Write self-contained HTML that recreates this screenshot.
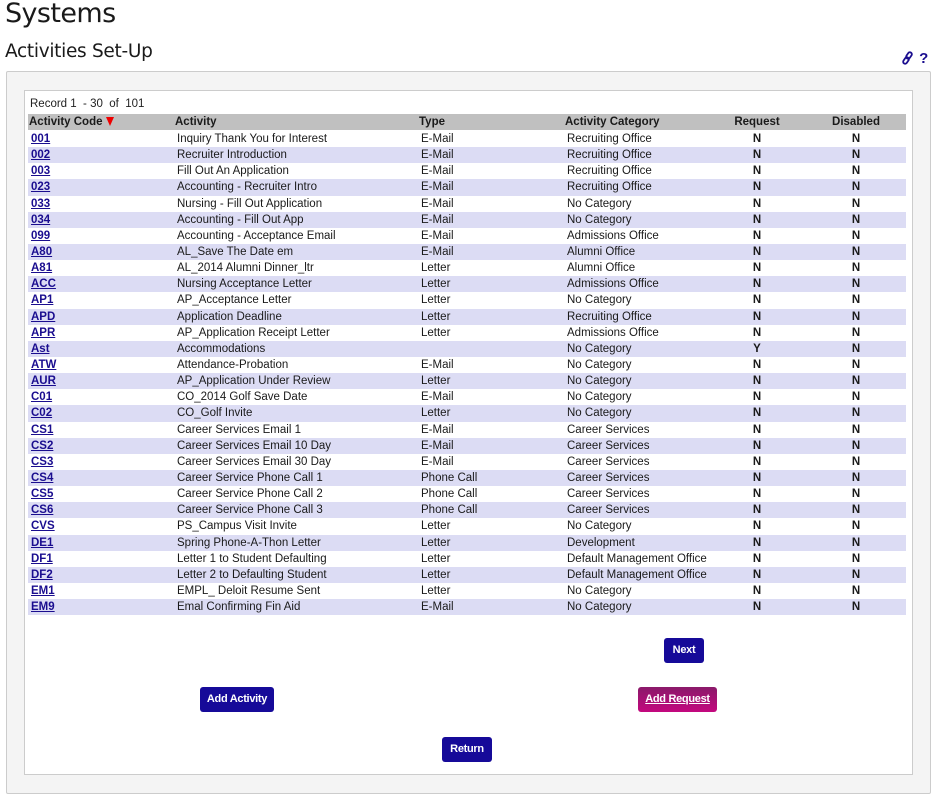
<!DOCTYPE html>
<html><head><style>
body{margin:0;width:936px;height:798px;background:#fff;font-family:"Liberation Sans",Arial,sans-serif;position:relative;overflow:hidden}
.t1{position:absolute;left:5px;top:-2px;font-size:27px;color:#1a1a1a;font-family:"DejaVu Sans","Liberation Sans",sans-serif;letter-spacing:-0.6px}
.t2{position:absolute;left:5px;top:41px;font-size:18.5px;color:#1a1a1a;font-family:"DejaVu Sans","Liberation Sans",sans-serif;letter-spacing:-0.3px}
.ic{position:absolute;left:901px;top:50px;color:#1a0d8f;font-weight:bold;font-size:15px}
.outer{position:absolute;left:6px;top:71px;width:923px;height:721px;background:#f4f4f4;border:1px solid #ccc;border-radius:2px}
.inner{position:absolute;left:24px;top:90px;width:887px;height:683px;background:#fff;border:1px solid #ccc}
.rec{position:absolute;left:30px;top:98px;font-size:11.5px;color:#222}
table{position:absolute;left:28px;top:114px;width:878px;border-collapse:collapse;font-size:11.5px;color:#1a1a1a;white-space:nowrap;table-layout:fixed}
th{background:#c0c0c0;text-align:left;height:16px;padding:0 0 0 1px;font-weight:bold}
thead tr{border-bottom:1px solid #fff}
td{height:16.15px;padding:0 0 0 3px}
tbody tr:nth-child(even) td{background:#dcdcf4}
td a{color:#1a0d8f;font-weight:bold;text-decoration:underline}
.c{text-align:center;font-weight:bold;padding:0}
th.c{text-align:center}
tr>.c:last-child{padding-right:8px}
.tri{display:inline-block;width:0;height:0;border-left:4px solid transparent;border-right:4px solid transparent;border-top:9px solid #e00;vertical-align:-1px}
.b{position:absolute;background:#160a99;color:#fff;font-size:11px;font-weight:bold;border-radius:3px;text-align:center;line-height:25px;height:25px;letter-spacing:-0.3px}
</style></head><body>
<div class="t1">Systems</div>
<div class="t2">Activities Set-Up</div>
<div class="ic"><svg width="14" height="14" viewBox="0 0 14 14" style="vertical-align:-2px"><g fill="none" stroke="#1a0d8f" stroke-width="1.8"><rect x="6" y="1" width="4" height="7" rx="2" transform="rotate(35 8 4.5)"/><rect x="3" y="6" width="4" height="7" rx="2" transform="rotate(35 5 9.5)"/></g></svg> ?</div>
<div class="outer"></div>
<div class="inner"></div>
<div class="rec">Record 1 &nbsp;- 30 &nbsp;of &nbsp;101</div>
<table>
<colgroup><col style="width:146px"><col style="width:244px"><col style="width:146px"><col style="width:136px"><col style="width:114px"><col></colgroup>
<thead><tr><th>Activity Code <span class="tri"></span></th><th>Activity</th><th>Type</th><th>Activity Category</th><th class="c">Request</th><th class="c">Disabled</th></tr></thead>
<tbody>
<tr><td><a>001</a></td><td>Inquiry Thank You for Interest</td><td>E-Mail</td><td>Recruiting Office</td><td class="c">N</td><td class="c">N</td></tr>
<tr><td><a>002</a></td><td>Recruiter Introduction</td><td>E-Mail</td><td>Recruiting Office</td><td class="c">N</td><td class="c">N</td></tr>
<tr><td><a>003</a></td><td>Fill Out An Application</td><td>E-Mail</td><td>Recruiting Office</td><td class="c">N</td><td class="c">N</td></tr>
<tr><td><a>023</a></td><td>Accounting - Recruiter Intro</td><td>E-Mail</td><td>Recruiting Office</td><td class="c">N</td><td class="c">N</td></tr>
<tr><td><a>033</a></td><td>Nursing - Fill Out Application</td><td>E-Mail</td><td>No Category</td><td class="c">N</td><td class="c">N</td></tr>
<tr><td><a>034</a></td><td>Accounting - Fill Out App</td><td>E-Mail</td><td>No Category</td><td class="c">N</td><td class="c">N</td></tr>
<tr><td><a>099</a></td><td>Accounting - Acceptance Email</td><td>E-Mail</td><td>Admissions Office</td><td class="c">N</td><td class="c">N</td></tr>
<tr><td><a>A80</a></td><td>AL_Save The Date em</td><td>E-Mail</td><td>Alumni Office</td><td class="c">N</td><td class="c">N</td></tr>
<tr><td><a>A81</a></td><td>AL_2014 Alumni Dinner_ltr</td><td>Letter</td><td>Alumni Office</td><td class="c">N</td><td class="c">N</td></tr>
<tr><td><a>ACC</a></td><td>Nursing Acceptance Letter</td><td>Letter</td><td>Admissions Office</td><td class="c">N</td><td class="c">N</td></tr>
<tr><td><a>AP1</a></td><td>AP_Acceptance Letter</td><td>Letter</td><td>No Category</td><td class="c">N</td><td class="c">N</td></tr>
<tr><td><a>APD</a></td><td>Application Deadline</td><td>Letter</td><td>Recruiting Office</td><td class="c">N</td><td class="c">N</td></tr>
<tr><td><a>APR</a></td><td>AP_Application Receipt Letter</td><td>Letter</td><td>Admissions Office</td><td class="c">N</td><td class="c">N</td></tr>
<tr><td><a>Ast</a></td><td>Accommodations</td><td></td><td>No Category</td><td class="c">Y</td><td class="c">N</td></tr>
<tr><td><a>ATW</a></td><td>Attendance-Probation</td><td>E-Mail</td><td>No Category</td><td class="c">N</td><td class="c">N</td></tr>
<tr><td><a>AUR</a></td><td>AP_Application Under Review</td><td>Letter</td><td>No Category</td><td class="c">N</td><td class="c">N</td></tr>
<tr><td><a>C01</a></td><td>CO_2014 Golf Save Date</td><td>E-Mail</td><td>No Category</td><td class="c">N</td><td class="c">N</td></tr>
<tr><td><a>C02</a></td><td>CO_Golf Invite</td><td>Letter</td><td>No Category</td><td class="c">N</td><td class="c">N</td></tr>
<tr><td><a>CS1</a></td><td>Career Services Email 1</td><td>E-Mail</td><td>Career Services</td><td class="c">N</td><td class="c">N</td></tr>
<tr><td><a>CS2</a></td><td>Career Services Email 10 Day</td><td>E-Mail</td><td>Career Services</td><td class="c">N</td><td class="c">N</td></tr>
<tr><td><a>CS3</a></td><td>Career Services Email 30 Day</td><td>E-Mail</td><td>Career Services</td><td class="c">N</td><td class="c">N</td></tr>
<tr><td><a>CS4</a></td><td>Career Service Phone Call 1</td><td>Phone Call</td><td>Career Services</td><td class="c">N</td><td class="c">N</td></tr>
<tr><td><a>CS5</a></td><td>Career Service Phone Call 2</td><td>Phone Call</td><td>Career Services</td><td class="c">N</td><td class="c">N</td></tr>
<tr><td><a>CS6</a></td><td>Career Service Phone Call 3</td><td>Phone Call</td><td>Career Services</td><td class="c">N</td><td class="c">N</td></tr>
<tr><td><a>CVS</a></td><td>PS_Campus Visit Invite</td><td>Letter</td><td>No Category</td><td class="c">N</td><td class="c">N</td></tr>
<tr><td><a>DE1</a></td><td>Spring Phone-A-Thon Letter</td><td>Letter</td><td>Development</td><td class="c">N</td><td class="c">N</td></tr>
<tr><td><a>DF1</a></td><td>Letter 1 to Student Defaulting</td><td>Letter</td><td>Default Management Office</td><td class="c">N</td><td class="c">N</td></tr>
<tr><td><a>DF2</a></td><td>Letter 2 to Defaulting Student</td><td>Letter</td><td>Default Management Office</td><td class="c">N</td><td class="c">N</td></tr>
<tr><td><a>EM1</a></td><td>EMPL_ Deloit Resume Sent</td><td>Letter</td><td>No Category</td><td class="c">N</td><td class="c">N</td></tr>
<tr><td><a>EM9</a></td><td>Emal Confirming Fin Aid</td><td>E-Mail</td><td>No Category</td><td class="c">N</td><td class="c">N</td></tr>
</tbody></table>
<div class="b" style="left:664px;top:638px;width:40px">Next</div>
<div class="b" style="left:200px;top:687px;width:74px">Add Activity</div>
<div class="b" style="left:638px;top:687px;width:79px;background:linear-gradient(#8a1a6a,#c4087e);text-decoration:underline">Add Request</div>
<div class="b" style="left:442px;top:737px;width:50px">Return</div>
</body></html>
